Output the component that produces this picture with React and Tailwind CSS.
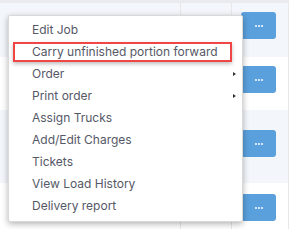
import React from 'react';

const items = [
  { label: 'Edit Job' },
  { label: 'Carry unfinished portion forward', marked: true },
  { label: 'Order', sub: true },
  { label: 'Print order', sub: true },
  { label: 'Assign Trucks' },
  { label: 'Add/Edit Charges' },
  { label: 'Tickets' },
  { label: 'View Load History' },
  { label: 'Delivery report' },
];

const rows = [
  { h: 'h-[54px]', bg: 'bg-[#f3f6fb]', pt: 'pt-[9px]' },
  { h: 'h-[53px]', bg: 'bg-white', pt: 'pt-[9px]' },
  { h: 'h-[73px]', bg: 'bg-[#f3f6fb]', pt: 'pt-[20px]' },
  { h: 'h-[46px]', bg: 'bg-white', pt: 'pt-[11px]' },
];

function DotsButton() {
  return (
    <button className="w-[35px] h-[27px] rounded-[3px] bg-[#5aa0dc] flex items-center justify-center gap-[1px]">
      <span className="w-[2px] h-[2px] bg-white rounded-full" />
      <span className="w-[2px] h-[2px] bg-white rounded-full" />
      <span className="w-[2px] h-[2px] bg-white rounded-full" />
    </button>
  );
}

export default function App() {
  return (
    <div className="relative w-[301px] h-[229px] overflow-hidden bg-white" style={{ fontFamily: 'Inter, "Liberation Sans", sans-serif' }}>
      {/* table behind */}
      <div className="h-[3px] w-[289px] bg-[#e9ebef]" />
      {rows.map((r, i) => (
        <div key={i} className={`flex w-[289px] border-r border-[#e6e8eb] ${r.h} ${r.bg}`}>
          <div className="w-[181px] border-r border-[#e6e8eb]" />
          <div className="w-[51px] border-r border-[#e6e8eb]" />
          <div className={`flex-1 pl-[9px] ${r.pt}`}>
            <DotsButton />
          </div>
        </div>
      ))}

      {/* dropdown menu */}
      <div className="absolute left-[8px] top-[15px] w-[235px] h-[207px] bg-white rounded-[2px] border border-[#d9d9d9] shadow-[0_2px_6px_rgba(0,0,0,0.3)] py-[3px]">
        {items.map((it) => (
          <div key={it.label} className="relative h-[22px] flex items-center pl-[23px] pr-2 text-[12px] text-[#555866] whitespace-nowrap">
            {it.label}
            {it.marked && (
              <span className="absolute left-[4px] right-[10px] top-[1px] bottom-[1px] border-2 border-[#f04646] shadow-[0_2px_4px_rgba(0,0,0,0.25)]" />
            )}
            {it.sub && (
              <span className="absolute right-[6px] top-1/2 -translate-y-1/2 w-0 h-0 border-y-[2px] border-y-transparent border-l-[3px] border-l-[#333]" />
            )}
          </div>
        ))}
      </div>
    </div>
  );
}
